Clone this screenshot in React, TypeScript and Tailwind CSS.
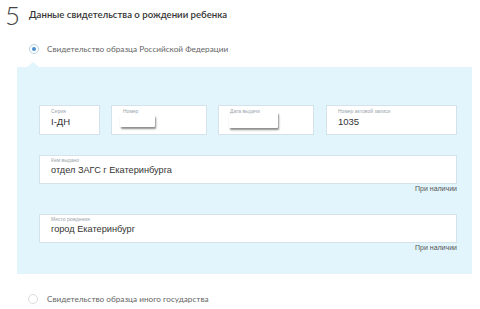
const field = "font-['Liberation_Sans',Arial,sans-serif]";

function Box({ label, value, className = "", blob }: { label: string; value?: string; className?: string; blob?: string }) {
  return (
    <div className={`relative h-[30px] bg-white border border-[#d6e2ea] ${className}`}>
      {blob && <div className={`absolute bg-white rounded-[1px] shadow-[1px_2px_2px_rgba(0,0,0,0.45)] ${blob}`} />}
      <div className={`${field} absolute z-10 left-[11px] top-[2px] text-[5px] leading-[6px] text-[#9aa4ab]`}>{label}</div>
      {value && (
        <div className={`${field} absolute left-[11px] top-[10px] text-[9.5px] leading-[12px] text-[#333]`}>{value}</div>
      )}
    </div>
  );
}

function Wide({ label, value }: { label: string; value: string }) {
  return (
    <div>
      <div className="relative h-[29px] bg-white border border-[#d6e2ea]">
        <div className={`${field} absolute left-[11px] top-[1px] text-[5px] leading-[6px] text-[#9aa4ab]`}>{label}</div>
        <div className={`${field} absolute left-[11px] top-[8px] text-[9.2px] leading-[12px] text-[#333]`}>{value}</div>
      </div>
      <div className={`${field} text-right text-[7px] leading-[8px] text-[#555] mt-[1px]`}>При наличии</div>
    </div>
  );
}

export default function App() {
  return (
    <div className="relative w-[480px] h-[309px] bg-white overflow-hidden font-['Lato','Open_Sans',sans-serif]">
      <div className="flex items-start pl-[5px] pt-[1px]">
        <div className="w-[16px] text-[26px] leading-[28px] font-light text-[#444]">5</div>
        <div className="ml-[8px] mt-[7px] text-[9.6px] leading-[14px] font-semibold text-[#333]">
          Данные свидетельства о рождении ребенка
        </div>
      </div>

      <div className="flex items-center pl-[29px] mt-[13px] h-[14px]">
        <div className="w-[10px] h-[10px] rounded-full border border-[#b8d3e6] flex items-center justify-center">
          <div className="w-[4px] h-[4px] rounded-full bg-[#4a90d0]" />
        </div>
        <div className="ml-[8px] text-[8.2px] text-[#666]">Свидетельство образца Российской Федерации</div>
      </div>

      <div className="relative mt-[11px] ml-[17px] w-[455px] bg-[#e2f4fc] pl-[22px] pr-[15px] pt-[38px] pb-[22px]">
        <div className="absolute left-[10px] -top-[5px] w-0 h-0 border-l-[6px] border-r-[6px] border-b-[5px] border-l-transparent border-r-transparent border-b-[#e2f4fc]" />
        <div className="flex">
          <Box label="Серия" value="I-ДН" className="w-[61px]" />
          <Box label="Номер" className="w-[96px] ml-[11px]" blob="left-[8px] top-[9px] w-[35px] h-[12px]" />
          <Box label="Дата выдачи" className="w-[96px] ml-[11px]" blob="left-[10px] top-[6px] w-[49px] h-[16px]" />
          <Box label="Номер актовой записи" value="1035" className="w-[131px] ml-[12px]" />
        </div>
        <div className="mt-[20px]">
          <Wide label="Кем выдано" value="отдел ЗАГС г Екатеринбурга" />
        </div>
        <div className="mt-[21px]">
          <Wide label="Место рождения" value="город Екатеринбург" />
        </div>
      </div>

      <div className="flex items-center pl-[28px] mt-[18px] h-[14px]">
        <div className="w-[10px] h-[10px] rounded-full border border-[#dcdcdc]" />
        <div className="ml-[9px] text-[8.2px] text-[#666]">Свидетельство образца иного государства</div>
      </div>
    </div>
  );
}
